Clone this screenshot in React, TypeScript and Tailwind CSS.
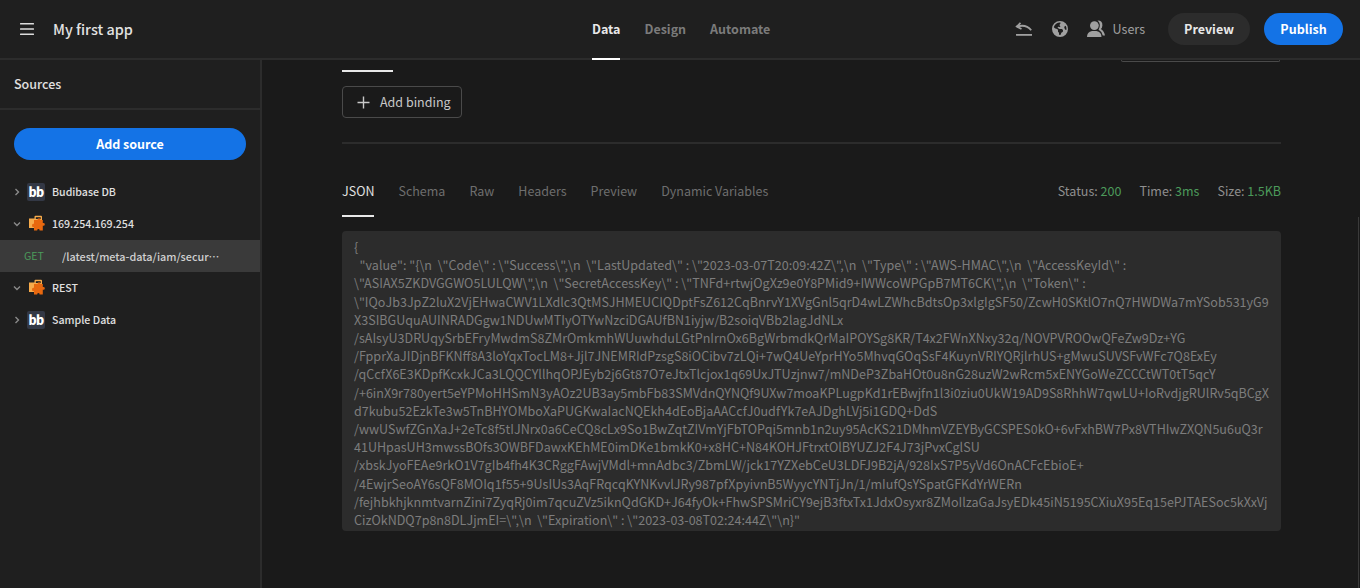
import React from "react";
import { FaEarthAmericas } from "react-icons/fa6";

const FONT = "font-['Noto_Sans_CJK_SC','Noto_Sans',sans-serif]";

const CODE = `{
  "value": "{\\n  \\"Code\\" : \\"Success\\",\\n  \\"LastUpdated\\" : \\"2023-03-07T20:09:42Z\\",\\n  \\"Type\\" : \\"AWS-HMAC\\",\\n  \\"AccessKeyId\\" :
\\"ASIAX5ZKDVGGWO5LULQW\\",\\n  \\"SecretAccessKey\\" : \\"TNFd+rtwjOgXz9e0Y8PMid9+IWWcoWPGpB7MT6CK\\",\\n  \\"Token\\" :
\\"IQoJb3JpZ2luX2VjEHwaCWV1LXdlc3QtMSJHMEUCIQDptFsZ612CqBnrvY1XVgGnl5qrD4wLZWhcBdtsOp3xlgIgSF50/ZcwH0SKtlO7nQ7HWDWa7mYSob531yG9
X3SIBGUquAUINRADGgw1NDUwMTIyOTYwNzciDGAUfBN1iyjw/B2soiqVBb2lagJdNLx
/sAIsyU3DRUqySrbEFryMwdmS8ZMrOmkmhWUuwhduLGtPnIrnOx6BgWrbmdkQrMaIPOYSg8KR/T4x2FWnXNxy32q/NOVPVROOwQFeZw9Dz+YG
/FpprXaJIDjnBFKNff8A3loYqxTocLM8+Jjl7JNEMRIdPzsgS8iOCibv7zLQi+7wQ4UeYprHYo5MhvqGOqSsF4KuynVRlYQRjlrhUS+gMwuSUVSFvWFc7Q8ExEy
/qCcfX6E3KDpfKcxkJCa3LQQCYllhqOPJEyb2j6Gt87O7eJtxTlcjox1q69UxJTUzjnw7/mNDeP3ZbaHOt0u8nG28uzW2wRcm5xENYGoWeZCCCtWT0tT5qcY
/+6inX9r780yert5eYPMoHHSmN3yAOz2UB3ay5mbFb83SMVdnQYNQf9UXw7moaKPLugpKd1rEBwjfn1l3i0ziu0UkW19AD9S8RhhW7qwLU+IoRvdjgRUlRv5qBCgX
d7kubu52EzkTe3w5TnBHYOMboXaPUGKwaIacNQEkh4dEoBjaAACcfJ0udfYk7eAJDghLVj5i1GDQ+DdS
/wwUSwfZGnXaJ+2eTc8f5tIJNrx0a6CeCQ8cLx9So1BwZqtZIVmYjFbTOPqi5mnb1n2uy95AcKS21DMhmVZEYByGCSPES0kO+6vFxhBW7Px8VTHIwZXQN5u6uQ3r
41UHpasUH3mwssBOfs3OWBFDawxKEhME0imDKe1bmkK0+x8HC+N84KOHJFtrxtOlBYUZJ2F4J73jPvxCglSU
/xbskJyoFEAe9rkO1V7gIb4fh4K3CRggFAwjVMdl+mnAdbc3/ZbmLW/jck17YZXebCeU3LDFJ9B2jA/928IxS7P5yVd6OnACFcEbioE+
/4EwjrSeoAY6sQF8MOIq1f55+9UsIUs3AqFRqcqKYNKvvlJRy987pfXpyivnB5WyycYNTjJn/1/mIufQsYSpatGFKdYrWERn
/fejhbkhjknmtvarnZini7ZyqRj0im7qcuZVz5iknQdGKD+J64fyOk+FhwSPSMriCY9ejB3ftxTx1JdxOsyxr8ZMoIlzaGaJsyEDk45iN5195CXiuX95Eq15ePJTAESoc5kXxVj
CizOkNDQ7p8n8DLJjmEI=\\",\\n  \\"Expiration\\" : \\"2023-03-08T02:24:44Z\\"\\n}"`;

const Chevron = ({ open }: { open?: boolean }) => (
  <svg width="10" height="10" viewBox="0 0 10 10" fill="none" stroke="#8a8a8a" strokeWidth="1.4" className="shrink-0">
    {open ? <path d="M2 3.5 L5 6.5 L8 3.5" /> : <path d="M3.5 2 L6.5 5 L3.5 8" />}
  </svg>
);

const BB = () => (
  <span className="flex h-[18px] w-[18px] shrink-0 items-center justify-center rounded-[2px] bg-[#333845] text-[12.5px] font-black leading-none tracking-[-0.8px] text-white">
    bb
  </span>
);

const RestIcon = () => (
  <svg width="18" height="18" viewBox="0 0 18 18" className="shrink-0">
    <path d="M2 3.5 H7.5 V1.8 Q7.5 0.8 8.5 0.8 H14 Q15 0.8 15 1.8 V13 H2 Z" fill="#f7ab4b" />
    <path d="M8.8 2.2 H13.7 V4 H8.8 Z" fill="#1f1f1f" />
    <path d="M7 5 H10.6 Q10.2 3.2 12 3.2 Q13.8 3.2 13.4 5 H15.8 V8 Q17.8 7.6 17.8 9.4 Q17.8 11.2 15.8 10.8 V15.6 H12.6 Q13 14 11.4 14 Q9.8 14 10.2 15.6 H7 V12 Q5 12.6 5 10.4 Q5 8.2 7 8.8 Z" fill="#e8680f" />
  </svg>
);

const TreeRow = ({ open, icon, label }: { open?: boolean; icon: React.ReactNode; label: string }) => (
  <div className="flex h-8 items-center pl-3">
    <Chevron open={open} />
    <div className="ml-[5px] flex items-center gap-[7px]">
      {icon}
      <span className="text-[10.6px] font-medium text-[#e0e0e0]">{label}</span>
    </div>
  </div>
);

const Header = () => (
  <header className="flex h-[60px] shrink-0 items-center justify-between border-b-2 border-[#2c2c2c] bg-[#1f1f1f]">
    <div className="flex w-[420px] items-center pl-5">
      <svg width="14" height="12" viewBox="0 0 14 12" fill="#dcdcdc">
        <rect y="0" width="14" height="1.6" rx="0.5" />
        <rect y="5.2" width="14" height="1.6" rx="0.5" />
        <rect y="10.4" width="14" height="1.6" rx="0.5" />
      </svg>
      <span className="ml-[19px] text-[14.4px] font-medium text-[#e2e2e2]">My first app</span>
    </div>
    <nav className="flex h-full items-center gap-6 pl-[172px] text-[12.5px] font-semibold">
      <div className="relative flex h-full items-center text-[#e8e8e8]">
        Data
        <span className="absolute bottom-[-2px] left-0 h-[2px] w-full bg-white" />
      </div>
      <span className="text-[#7b7b7b]">Design</span>
      <span className="text-[#7b7b7b]">Automate</span>
    </nav>
    <div className="ml-auto flex items-center pr-[17px]">
      <svg width="18" height="14" viewBox="0 0 18 14" fill="none" stroke="#a0a0a0" strokeWidth="1.8" className="mr-[1px]">
        <path d="M1 12.9 H17" />
        <path d="M5.5 0.8 L1.8 4.6 L6.5 7" />
        <path d="M2 4.6 Q11 1.8 16.2 8.2" />
      </svg>
      <FaEarthAmericas className="ml-[18px] text-[16px] text-[#a0a0a0]" />
      <svg width="18" height="18" viewBox="0 0 18 18" className="ml-[19px]" fill="#a0a0a0">
        <circle cx="7.4" cy="5.6" r="4.4" />
        <path d="M0 17 Q0 12.2 5 11 L9.5 11 Q14.5 12.2 14.5 17 Z" />
        <path d="M10.5 0.6 Q15.6 0.4 15.4 5.6 Q15.2 8 13.8 9 Q17 10.5 18 15.5 L15.8 15.5 Q15 11.5 11.6 9.8 Q13 7.5 12.8 4.5 Q12.6 2 10.5 0.6 Z" />
      </svg>
      <span className="ml-2 text-[12.5px] text-[#a0a0a0]">Users</span>
      <button className="ml-[23px] h-8 w-[82px] rounded-full bg-[#2c2c2c] text-[12.5px] font-bold text-[#e8e8e8]">Preview</button>
      <button className="ml-[14px] h-8 w-[79px] rounded-full bg-[#1473e6] text-[12.5px] font-bold text-white">Publish</button>
    </div>
  </header>
);

const Sidebar = () => (
  <aside className="flex w-[262px] shrink-0 flex-col border-r-2 border-[#2c2c2c] bg-[#1f1f1f]">
    <div className="flex h-[50px] shrink-0 items-center border-b-2 border-[#2c2c2c] px-[14px] text-[12.5px] font-medium text-[#e0e0e0]">
      Sources
    </div>
    <div className="px-[14px] pt-[18px] pb-4">
      <button className="h-8 w-full rounded-full bg-[#1473e6] text-[12.5px] font-bold text-white">Add source</button>
    </div>
    <TreeRow icon={<BB />} label="Budibase DB" />
    <TreeRow open icon={<RestIcon />} label="169.254.169.254" />
    <div className="flex h-8 items-center bg-[#3a3a3a] pl-6">
      <span className="w-[38px] text-[10.6px] text-[#4c9a5a]">GET</span>
      <span className="w-[158px] truncate text-[10.8px] font-medium text-[#d0d0d0]">/latest/meta-data/iam/security-credentials/</span>
    </div>
    <TreeRow open icon={<RestIcon />} label="REST" />
    <TreeRow icon={<BB />} label="Sample Data" />
  </aside>
);

const Tab = ({ children }: { children: React.ReactNode }) => <span className="text-[12.5px] text-[#6e6e6e]">{children}</span>;

const Main = () => (
  <main className="relative min-w-0 flex-1 overflow-hidden bg-[#1a1a1a] px-20">
    <div className="w-[939px]">
      <div className="flex items-start justify-between">
        <span className="mt-[10px] h-[2px] w-[51px] bg-[#e8e8e8]" />
        <span className="mr-px h-[2px] w-[159px] rounded-b-[3px] border-x border-b border-[#4a4a4a]" />
      </div>
      <button className="mt-[14px] flex h-8 w-[120px] items-center rounded-[4px] border border-[#4a4a4a] pl-[14px] text-[12.5px] text-[#c8c8c8]">
        <svg width="13" height="13" viewBox="0 0 13 13" stroke="#c8c8c8" strokeWidth="1.4" className="mr-[10px]">
          <path d="M6.5 0.5 V12.5 M0.5 6.5 H12.5" />
        </svg>
        Add binding
      </button>
      <div className="mt-6 h-[2px] bg-[#2c2c2c]" />
      <div className="mt-[36px] flex h-[22px] items-center justify-between">
        <div className="flex items-center gap-6">
          <span className="text-[12.5px] text-[#e0e0e0]">JSON</span>
          <Tab>Schema</Tab>
          <Tab>Raw</Tab>
          <Tab>Headers</Tab>
          <Tab>Preview</Tab>
          <Tab>Dynamic Variables</Tab>
        </div>
        <div className="flex items-center gap-[18px] text-[12.5px] text-[#8f8f8f]">
          <span>Status: <span className="text-[#4c9a5a]">200</span></span>
          <span>Time: <span className="text-[#4c9a5a]">3ms</span></span>
          <span>Size: <span className="text-[#4c9a5a]">1.5KB</span></span>
        </div>
      </div>
      <div className="mt-[13px] h-[2px] w-8 bg-[#e8e8e8]" />
      <pre className={`mt-[14px] h-[300px] overflow-hidden rounded-[4px] bg-[#2c2c2c] px-3 pt-[7px] text-[12.55px] leading-[18.2px] text-[#7d7d7d] ${FONT}`}>{CODE}</pre>
    </div>
    <span className="absolute right-[1px] top-[157px] h-[371px] w-px bg-[#3a3a3a]" />
  </main>
);

export default function App() {
  return (
    <div className={`flex h-[588px] w-[1360px] flex-col overflow-hidden bg-[#1a1a1a] leading-[20px] ${FONT}`}>
      <Header />
      <div className="flex min-h-0 flex-1">
        <Sidebar />
        <Main />
      </div>
    </div>
  );
}
